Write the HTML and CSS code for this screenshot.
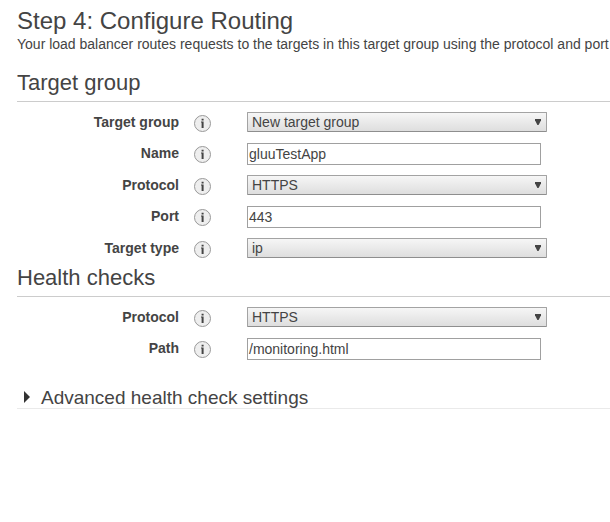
FILE: index.html
```html
<!DOCTYPE html>
<html lang="en">
<head>
<meta charset="utf-8">
<title>Configure Routing</title>
<link rel="stylesheet" href="styles.css">
</head>
<body>
<svg class="defs" width="0" height="0">
  <symbol id="info" viewBox="0 0 17 17">
    <circle cx="8.5" cy="8.5" r="8" fill="#eee" stroke="#999"/>
    <path d="M7.6 3.8h2v1.8h-2zM7 6.5h2.6v6.5h-2v-5.5h-.6z" fill="#444"/>
  </symbol>
</svg>
<main class="page">
  <h1 class="title">Step 4: Configure Routing</h1>
  <p class="intro">Your load balancer routes requests to the targets in this target group using the protocol and port</p>

  <h2 class="section section-target">Target group</h2>
  <div class="rows">
    <div class="row"><span class="label">Target group</span><svg class="info"><use href="#info"/></svg><div class="select"><span>New target group</span><i class="arrow"></i></div></div>
    <div class="row row-input"><span class="label">Name</span><svg class="info"><use href="#info"/></svg><div class="input">gluuTestApp</div></div>
    <div class="row"><span class="label">Protocol</span><svg class="info"><use href="#info"/></svg><div class="select"><span>HTTPS</span><i class="arrow"></i></div></div>
    <div class="row row-input"><span class="label">Port</span><svg class="info"><use href="#info"/></svg><div class="input">443</div></div>
    <div class="row"><span class="label">Target type</span><svg class="info"><use href="#info"/></svg><div class="select"><span>ip</span><i class="arrow"></i></div></div>
  </div>

  <h2 class="section section-health">Health checks</h2>
  <div class="rows">
    <div class="row"><span class="label">Protocol</span><svg class="info"><use href="#info"/></svg><div class="select"><span>HTTPS</span><i class="arrow"></i></div></div>
    <div class="row row-input"><span class="label">Path</span><svg class="info"><use href="#info"/></svg><div class="input">/monitoring.html</div></div>
  </div>

  <div class="advanced"><i class="caret"></i><span>Advanced health check settings</span></div>
</main>
</body>
</html>
```
FILE: styles.css
```css
* {
  box-sizing: border-box;
}

body {
  margin: 0;
  background: #fff;
  color: #444;
  font: 14px/20px "Liberation Sans", Arial, sans-serif;
  overflow: hidden;
}

.defs {
  display: block;
}

.page {
  padding: 7px 0 0 17px;
  height: 522px;
}

.title {
  margin: 0;
  font-size: 24px;
  font-weight: 400;
  line-height: 28px;
}

.intro {
  margin: -1px 0 0;
  white-space: nowrap;
}

.section {
  margin: 0;
  height: 33px;
  border-bottom: 1px solid #ccc;
  font-size: 22px;
  font-weight: 400;
  line-height: 28px;
}

.section-target {
  margin-top: 15px;
}

.section-health {
  margin-top: -5px;
}

.rows {
  padding-top: 10px;
}

.row {
  display: flex;
  align-items: flex-start;
  height: 31px;
}

.row-input {
  height: 32px;
}

.label {
  width: 162px;
  text-align: right;
  font-weight: 700;
}

.info {
  flex: none;
  width: 17px;
  height: 17px;
  margin: 3px 36px 0 15px;
}

.select {
  display: flex;
  justify-content: space-between;
  width: 300px;
  height: 20px;
  padding: 0 5px 0 4px;
  border: 1px solid #a3a3a3;
  border-bottom-color: #8e8e8e;
  border-radius: 1px;
  background: linear-gradient(#f6f6f6, #dedede);
  line-height: 18px;
}

.arrow {
  width: 6px;
  height: 6px;
  margin-top: 6px;
  background: #444;
  clip-path: polygon(0 0, 100% 0, 100% 20%, 60% 100%, 40% 100%, 0 20%);
}

.input {
  width: 294px;
  height: 22px;
  padding-left: 1px;
  border: 1px solid #a0a0a0;
  line-height: 20px;
}

.advanced {
  display: flex;
  height: 24px;
  margin-top: 15px;
  border-bottom: 1px solid #eaeaea;
  font-size: 19px;
  line-height: 26px;
}

.caret {
  width: 6px;
  height: 12px;
  margin: 6px 11px 0 7px;
  background: #333;
  clip-path: polygon(0 0, 100% 50%, 0 100%);
}
```
